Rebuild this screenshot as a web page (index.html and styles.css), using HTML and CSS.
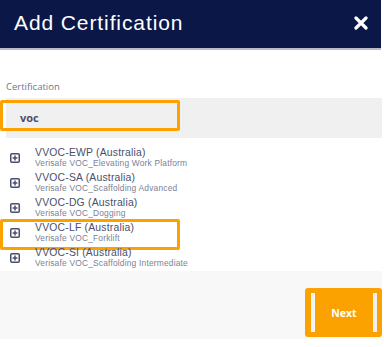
FILE: index.html
```html
<!DOCTYPE html>
<html>
<head>
<meta charset="utf-8">
<link rel="stylesheet" href="styles.css">
</head>
<body>
<div class="modal">
  <header class="head">
    <h1 class="title">Add Certification</h1>
    <svg class="close" width="14" height="14" viewBox="0 0 14 14"><path d="M2 2L12 12M12 2L2 12" stroke="#fff" stroke-width="3.2" stroke-linecap="round"/></svg>
  </header>
  <main class="body">
    <div class="label">Certification</div>
    <div class="field"><span class="value">voc</span></div>
    <ul class="list">
      <li class="item"><svg class="ico" viewBox="0 0 10 10"><rect x="0.75" y="0.75" width="8.5" height="8.5" rx="1" fill="none" stroke="#4a4f6c" stroke-width="1.5"/><path d="M5 2.6V7.4M2.6 5H7.4" stroke="#4a4f6c" stroke-width="1.5"/></svg><div class="txt"><div class="t">VVOC-EWP (Australia)</div><div class="s">Verisafe VOC_Elevating Work Platform</div></div></li>
      <li class="item"><svg class="ico" viewBox="0 0 10 10"><rect x="0.75" y="0.75" width="8.5" height="8.5" rx="1" fill="none" stroke="#4a4f6c" stroke-width="1.5"/><path d="M5 2.6V7.4M2.6 5H7.4" stroke="#4a4f6c" stroke-width="1.5"/></svg><div class="txt"><div class="t">VVOC-SA (Australia)</div><div class="s">Verisafe VOC_Scaffolding Advanced</div></div></li>
      <li class="item"><svg class="ico" viewBox="0 0 10 10"><rect x="0.75" y="0.75" width="8.5" height="8.5" rx="1" fill="none" stroke="#4a4f6c" stroke-width="1.5"/><path d="M5 2.6V7.4M2.6 5H7.4" stroke="#4a4f6c" stroke-width="1.5"/></svg><div class="txt"><div class="t">VVOC-DG (Australia)</div><div class="s">Verisafe VOC_Dogging</div></div></li>
      <li class="item hl"><svg class="ico" viewBox="0 0 10 10"><rect x="0.75" y="0.75" width="8.5" height="8.5" rx="1" fill="none" stroke="#4a4f6c" stroke-width="1.5"/><path d="M5 2.6V7.4M2.6 5H7.4" stroke="#4a4f6c" stroke-width="1.5"/></svg><div class="txt"><div class="t">VVOC-LF (Australia)</div><div class="s">Verisafe VOC_Forklift</div></div></li>
      <li class="item"><svg class="ico" viewBox="0 0 10 10"><rect x="0.75" y="0.75" width="8.5" height="8.5" rx="1" fill="none" stroke="#4a4f6c" stroke-width="1.5"/><path d="M5 2.6V7.4M2.6 5H7.4" stroke="#4a4f6c" stroke-width="1.5"/></svg><div class="txt"><div class="t">VVOC-SI (Australia)</div><div class="s">Verisafe VOC_Scaffolding Intermediate</div></div></li>
    </ul>
  </main>
  <footer class="foot">
    <div class="btn-wrap"><button class="btn">Next</button></div>
  </footer>
</div>
</body>
</html>
```
FILE: styles.css
```css
*, *::before, *::after { box-sizing: border-box; }
html, body { margin: 0; padding: 0; background: #fff; }
body { width: 384px; height: 347px; overflow: hidden; font-family: "Open Sans", "Liberation Sans", sans-serif; }
.modal { width: 382px; position: relative; }
.head {
  width: 381px; height: 50px; background: #0b1847;
  border-bottom: 2px solid #b7bbcb;
  display: flex; align-items: center; justify-content: space-between;
  padding: 0 13px 2px 14px;
}
.title { margin: 0; color: #fff; font-family: "Liberation Sans", Arial, sans-serif; font-weight: 400; font-size: 21px; letter-spacing: 0.9px; }
.close { display: block; }
.body { position: relative; padding-top: 31px; height: 221px; }
.label { padding-left: 6px; font-size: 9.5px; color: #6f748c; line-height: 12px; }
.field { position: relative; margin: 5px 0 0 6px; height: 40px; background: #f0f0f0; display: flex; align-items: center; padding-left: 14px; }
.field::after { content: ""; position: absolute; left: -6px; top: 2px; width: 180px; height: 31px; border: 3px solid #fba100; border-radius: 2px; }
.value { font-size: 11px; font-weight: 700; color: #4a4f6c; margin-top: -2px; }
.list { list-style: none; margin: 7px 0 0; padding: 0; }
.item { position: relative; height: 25px; display: flex; align-items: center; padding-left: 10px; }
.ico { width: 10px; height: 10px; flex: none; margin-right: 15px; }
.txt { font-family: "Liberation Sans", Arial, sans-serif; }
.t { font-size: 10.4px; color: #4a4f6c; line-height: 12px; letter-spacing: 0.2px; }
.s { font-size: 8.4px; color: #7a7f97; line-height: 9.5px; letter-spacing: 0.2px; }
.hl::after { content: ""; position: absolute; left: 0; top: -1px; width: 180px; height: 31px; border: 3px solid #fba100; border-radius: 2px; }
.foot { width: 382px; height: 68px; background: #f8f8f8; display: flex; justify-content: flex-end; align-items: flex-end; padding-bottom: 2px; }
.btn-wrap { width: 77px; height: 49px; background: #fba100; border-radius: 3px; padding: 5px 5px; display: flex; }
.btn {
  flex: 1; border: 0; margin: 0 0 0 1px; padding: 0;
  background: #fba100; color: #fff; font-family: "Open Sans", sans-serif; font-weight: 700; font-size: 10.5px;
  border-left: 4px solid #f4f4f4; border-right: 4px solid #f0f0f0;
}
```
